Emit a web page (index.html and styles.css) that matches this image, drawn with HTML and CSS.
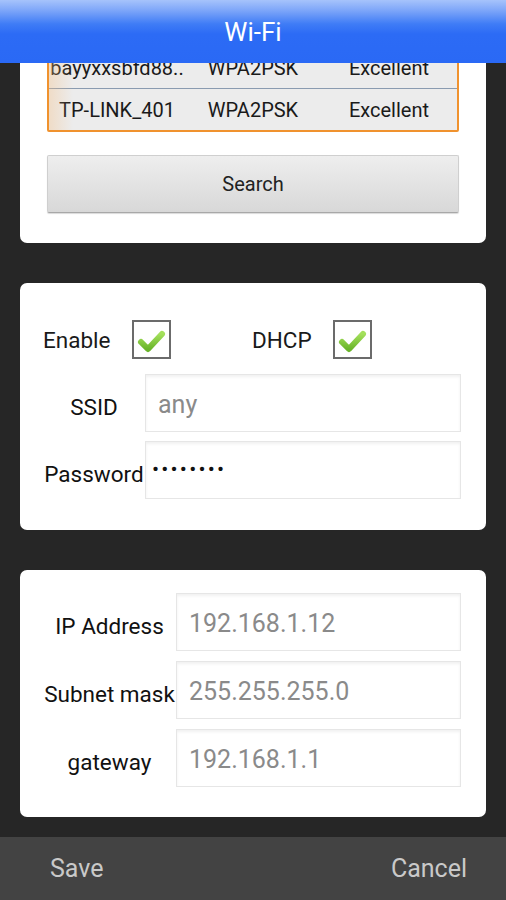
FILE: index.html
```html
<!DOCTYPE html>
<html lang="en">
<head>
    <meta charset="UTF-8">
    <meta name="viewport" content="width=device-width, initial-scale=1.0">
    <title>Wi-Fi</title>
    <link rel="stylesheet" href="styles.css">
</head>
<body>
    <div class="screen">
        <header class="title-bar">Wi-Fi</header>

        <main class="content">
            <section class="card card-scan">
                <div class="ap-list">
                    <div class="ap-row">
                        <span>bayyxxsbfd88..</span>
                        <span>WPA2PSK</span>
                        <span>Excellent</span>
                    </div>
                    <div class="ap-row">
                        <span>TP-LINK_401</span>
                        <span>WPA2PSK</span>
                        <span>Excellent</span>
                    </div>
                </div>
                <button type="button" class="btn-search">Search</button>
            </section>

            <section class="card card-wifi">
                <div class="check-row">
                    <div class="check-group">
                        <span class="check-label">Enable</span>
                        <span class="checkbox">
                            <svg viewBox="0 0 35 35" width="35" height="35">
                                <defs>
                                    <linearGradient id="tick" x1="0" y1="0" x2="0" y2="1">
                                        <stop offset="0" stop-color="#a4e05c"/>
                                        <stop offset="1" stop-color="#6ab52a"/>
                                    </linearGradient>
                                </defs>
                                <path d="M7 20 L14 27 L28 12" fill="none" stroke="url(#tick)" stroke-width="6" stroke-linecap="round" stroke-linejoin="round"/>
                            </svg>
                        </span>
                    </div>
                    <div class="check-group">
                        <span class="check-label check-label-dhcp">DHCP</span>
                        <span class="checkbox">
                            <svg viewBox="0 0 35 35" width="35" height="35">
                                <path d="M7 20 L14 27 L28 12" fill="none" stroke="url(#tick)" stroke-width="6" stroke-linecap="round" stroke-linejoin="round"/>
                            </svg>
                        </span>
                    </div>
                </div>
                <div class="field-row">
                    <label class="field-label">SSID</label>
                    <div class="field-input">any</div>
                </div>
                <div class="field-row">
                    <label class="field-label">Password</label>
                    <div class="field-input secret">&bull;&bull;&bull;&bull;&bull;&bull;&bull;&bull;</div>
                </div>
            </section>

            <section class="card card-ip">
                <div class="field-row">
                    <label class="field-label">IP Address</label>
                    <div class="field-input">192.168.1.12</div>
                </div>
                <div class="field-row">
                    <label class="field-label">Subnet mask</label>
                    <div class="field-input">255.255.255.0</div>
                </div>
                <div class="field-row">
                    <label class="field-label">gateway</label>
                    <div class="field-input">192.168.1.1</div>
                </div>
            </section>
        </main>

        <footer class="action-bar">
            <span>Save</span>
            <span>Cancel</span>
        </footer>
    </div>
</body>
</html>
```

FILE: styles.css
```css
body {
    margin: 0;
    padding: 0;
    background-color: #262626;
    font-family: Roboto, "Liberation Sans", sans-serif;
    color: #1a1a1a;
}

.screen {
    position: relative;
    height: 900px;
    display: flex;
    flex-direction: column;
    overflow: hidden;
}

.title-bar {
    position: absolute;
    top: 0;
    left: 0;
    right: 0;
    height: 63px;
    z-index: 2;
    display: flex;
    align-items: center;
    justify-content: center;
    color: #fff;
    font-size: 26px;
    background: linear-gradient(to bottom, #a6c3fb 0px, #7fa7f9 10px, #3f7cf6 24px, #2c6bf5 34px, #2a69f5 63px);
}

.content {
    flex: 1;
    padding-top: 18px;
    display: flex;
    flex-direction: column;
    gap: 40px;
}

.card {
    margin: 0 20px;
    background-color: #fff;
    border-radius: 7px;
}

/* scan list */
.card-scan {
    padding: 27px 27px 30px 27px;
}

.ap-list {
    position: relative;
    border: 2px solid #f0922e;
    border-radius: 2px;
    background-color: #ececec;
}

.ap-list::before {
    content: "";
    position: absolute;
    top: 0;
    bottom: 0;
    left: 0;
    width: 24px;
    background: linear-gradient(to right, rgba(246, 190, 130, 0.35), rgba(246, 190, 130, 0));
}

.ap-row {
    display: grid;
    grid-template-columns: 1fr 1fr 1fr;
    height: 41px;
    align-items: center;
    font-size: 20px;
    color: #1a1a1a;
    text-align: center;
}

.ap-row + .ap-row {
    border-top: 1px solid #8a9bb0;
}

.btn-search {
    display: block;
    width: 100%;
    height: 58px;
    margin-top: 23px;
    border: 1px solid #cfcfcf;
    border-bottom-color: #a8a8a8;
    border-radius: 2px;
    background: linear-gradient(to bottom, #eeeeee, #d8d8d8);
    font-family: Roboto, "Liberation Sans", sans-serif;
    font-size: 20px;
    color: #222;
    box-shadow: 0 1px 1px rgba(0, 0, 0, 0.15);
}

/* wifi settings */
.card-wifi {
    padding: 37px 25px 31px 23px;
}

.check-row {
    display: flex;
    align-items: center;
    margin-bottom: 15px;
}

.check-group {
    display: flex;
    align-items: center;
    width: 211px;
}

.check-label {
    width: 89px;
    font-size: 22.5px;
}

.check-label-dhcp {
    width: 81px;
}

.checkbox {
    width: 35px;
    height: 35px;
    border: 2px solid #6b6b6b;
    display: flex;
}

.field-row {
    display: flex;
    align-items: center;
}

.field-row + .field-row {
    margin-top: 9px;
}

.field-label {
    width: 102px;
    padding-top: 8px;
    text-align: center;
    font-size: 22.5px;
    color: #111;
}

.card-ip {
    padding: 23px 25px 30px 23px;
}

.card-ip .field-row + .field-row {
    margin-top: 10px;
}

.card-ip .field-label {
    width: 133px;
    white-space: nowrap;
}

.field-input {
    flex: 1;
    height: 58px;
    box-sizing: border-box;
    border: 1px solid #e6e6e6;
    box-shadow: inset 0 2px 3px rgba(0, 0, 0, 0.06);
    padding-left: 12px;
    padding-top: 2px;
    display: flex;
    align-items: center;
    font-size: 25px;
    color: #8a8a8a;
    background-color: #fff;
}

.field-input.secret {
    color: #111;
    font-size: 21px;
    letter-spacing: 2.2px;
    padding-left: 6px;
    padding-top: 0;
    padding-bottom: 2px;
}

/* bottom actions */
.action-bar {
    height: 63px;
    background-color: #434343;
    display: flex;
    align-items: center;
    justify-content: space-between;
    padding: 0 39px 0 50px;
    font-size: 25px;
    color: #c9c9c9;
}
```
